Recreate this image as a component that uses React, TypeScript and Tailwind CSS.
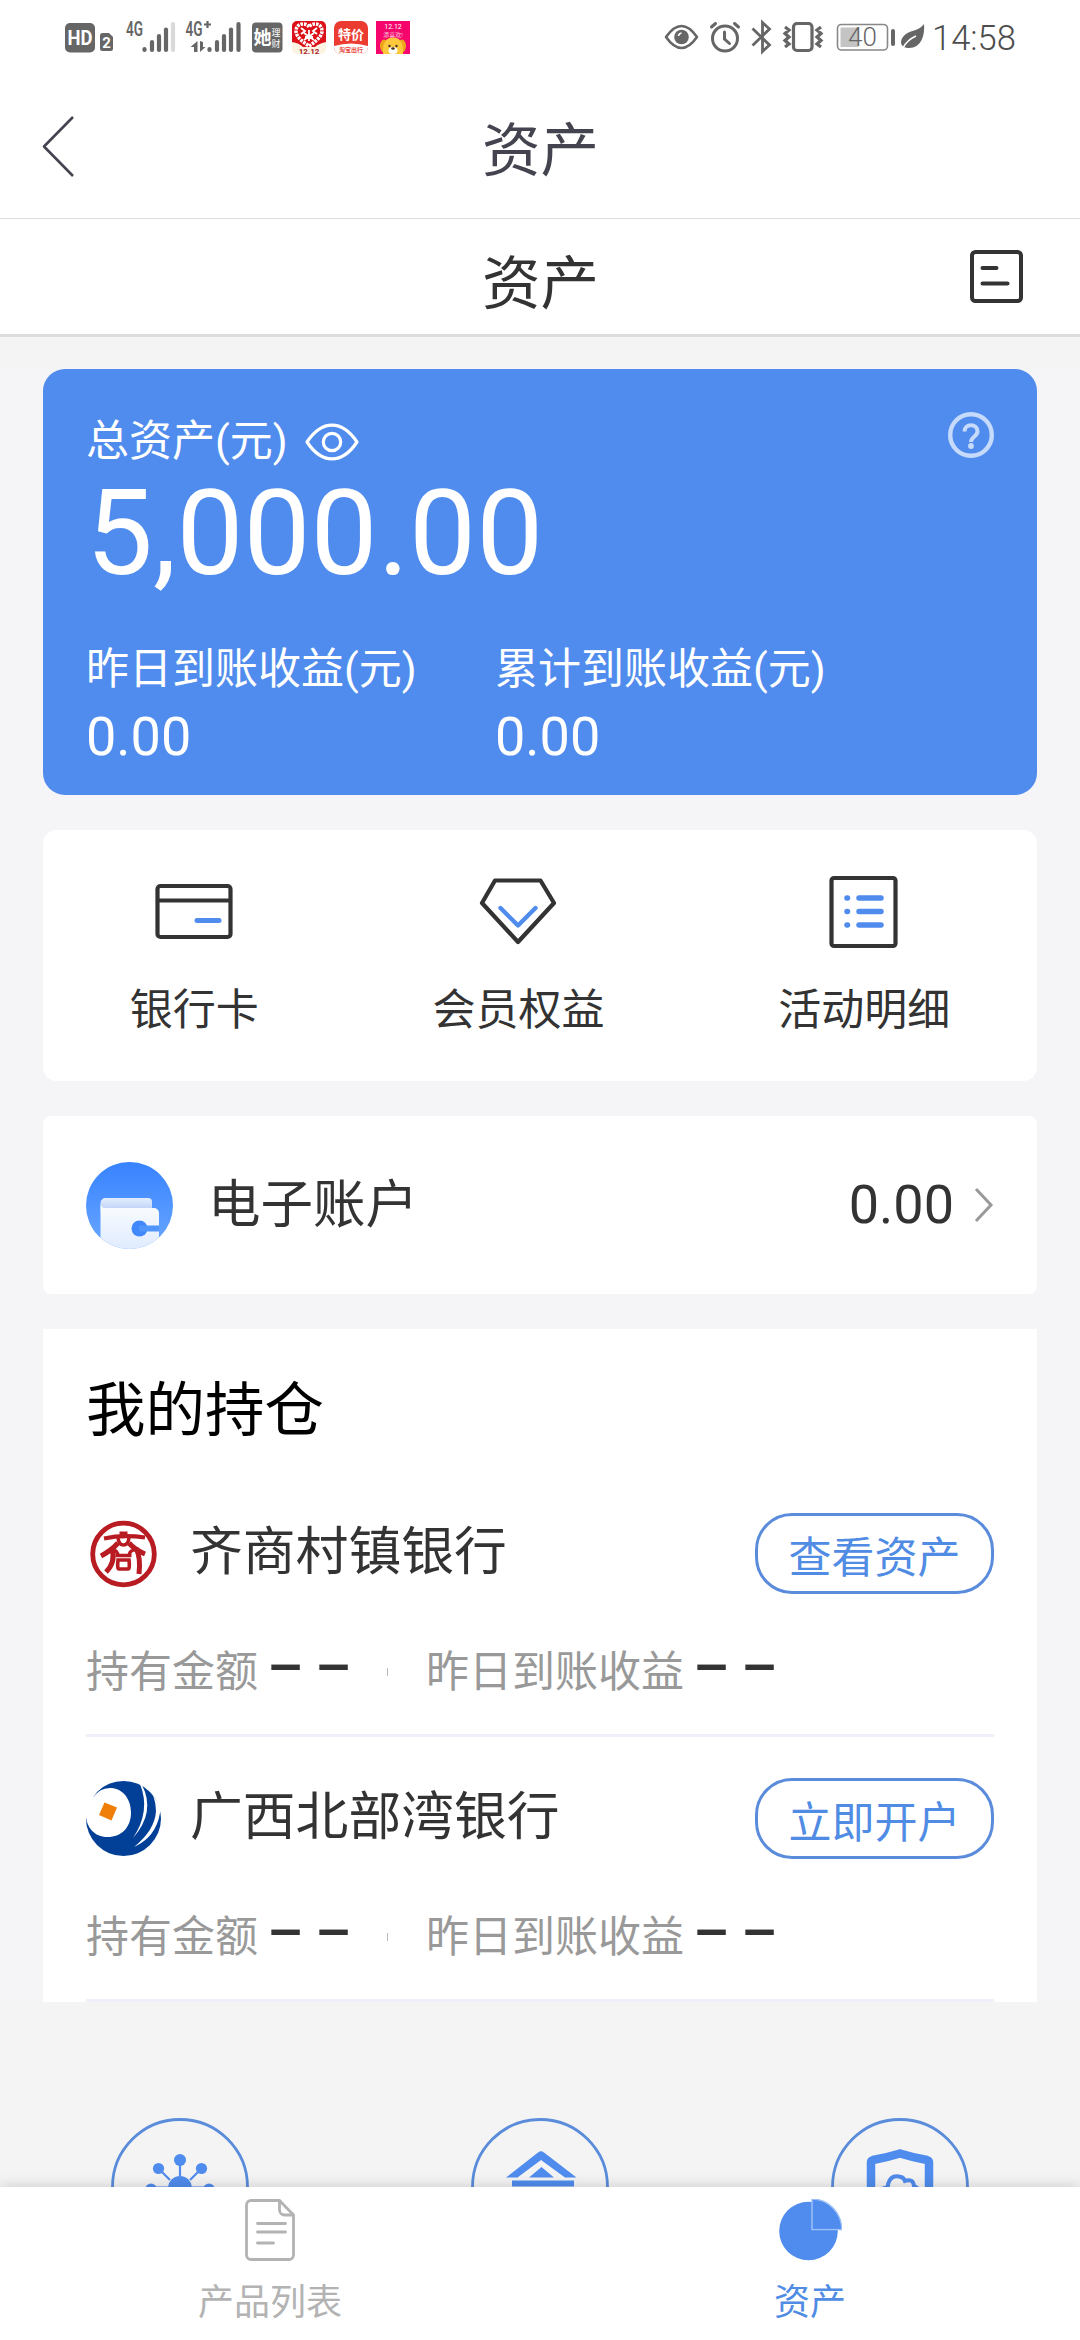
import React, { type FC, type PropsWithChildren, type ReactNode } from "react";

const StatusIcon: FC<PropsWithChildren<{ x: number; w: number }>> = ({ x, w, children }) => (
  <svg width={w} height={44} viewBox={`${x} 12 ${w} 44`} className="shrink-0 overflow-visible" fill="#666">
    {children}
  </svg>
);

const Signal: FC<{ xs: number[]; faded?: boolean }> = ({ xs, faded }) => (
  <>
    {xs.map((x, i) => (
      <line
        key={x}
        x1={x}
        x2={x}
        y1={50}
        y2={[49, 42, 36, 29.5, 24][i]}
        stroke={faded && i === 4 ? "#d9d9d9" : "#666"}
        strokeWidth={4.2}
        strokeLinecap="round"
      />
    ))}
  </>
);

const StatusBar = () => (
  <div className="flex h-[76px] justify-between pt-3 pr-[66px] pl-[65px]">
    <div className="flex">
      <StatusIcon x={65} w={61}>
        <rect x="65" y="23" width="30" height="29.5" rx="5" />
        <text x="80" y="45" fontSize="20" fontWeight="bold" fill="#fff" textAnchor="middle" textLength="25" lengthAdjust="spacingAndGlyphs">HD</text>
        <path d="M103 33h6l4 4v11.500a2.500 2.500 0 0 1-2.500 2.500h-8a2.500 2.500 0 0 1-2.500-2.500v-13a2.500 2.500 0 0 1 3-2.500z" />
        <text x="106.500" y="47.500" fontSize="15" fontWeight="bold" fill="#fff" textAnchor="middle">2</text>
      </StatusIcon>
      <StatusIcon x={126} w={59}>
        <text x="126" y="36" fontSize="20" fontWeight="600" textLength="17" lengthAdjust="spacingAndGlyphs">4G</text>
        <Signal xs={[144.500, 152, 159, 166, 173]} faded />
      </StatusIcon>
      <StatusIcon x={185} w={67}>
        <text x="185.500" y="36" fontSize="20" fontWeight="600" textLength="17" lengthAdjust="spacingAndGlyphs">4G</text>
        <path d="M207.500 21v7M204 24.500h7" stroke="#666" strokeWidth="2.200" />
        <path d="M197.500 41v11h-3.500v-5h-3.500zM200 41v11l5.500-5h-2.500v-5z" />
        <Signal xs={[209.500, 217, 224, 231, 238.500]} />
      </StatusIcon>
      <StatusIcon x={252} w={40}>
        <rect x="252" y="22.500" width="30.500" height="30" rx="4" />
        <text x="253.500" y="44" fontSize="18" fontWeight="bold" fill="#fff">她</text>
        <text x="271.500" y="36" fontSize="9" fill="#fff">理</text>
        <text x="271.500" y="46.500" fontSize="9" fill="#fff">财</text>
      </StatusIcon>
      <StatusIcon x={292} w={42}>
        <rect x="292" y="21" width="34" height="33" rx="5" fill="#fdf3e3" />
        <path d="M292 26a5 5 0 0 1 5-5h24a5 5 0 0 1 5 5v16q-8 2-11 5h-12q-4-4-11-5z" fill="#dc1018" />
        <path d="M309 27c-3-5-13-4-13 4 0 6 7 11 13 15 6-4 13-9 13-15 0-8-10-9-13-4z" fill="none" stroke="#fff" strokeWidth="3.500" strokeDasharray="2.500 1" />
        <path d="M301 28l4 3-4 3M317 28l-4 3 4 3M305 37h8M309 30v11M304 33l10 7M314 33l-10 7" stroke="#fff" strokeWidth="1.800" fill="none" />
        <text x="309" y="53.500" fontSize="8" fontWeight="bold" fill="#a81c28" textAnchor="middle">12.12</text>
      </StatusIcon>
      <StatusIcon x={334} w={42}>
        <rect x="334" y="21" width="34" height="33" rx="7" fill="#ec3b30" />
        <path d="M334 46q17-5 34 0v1a7 7 0 0 1-7 7h-20a7 7 0 0 1-7-7z" fill="#fff" />
        <text x="351" y="39" fontSize="13" fontWeight="bold" fill="#fff" textAnchor="middle">特价</text>
        <text x="351" y="52" fontSize="6" fontWeight="bold" fill="#e8493c" textAnchor="middle">淘宝出行</text>
      </StatusIcon>
      <StatusIcon x={376} w={34}>
        <rect x="376" y="21" width="34" height="33" fill="#f5056c" />
        <text x="393" y="29" fontSize="7" fill="#fff" textAnchor="middle">12.12</text>
        <text x="393" y="36.500" fontSize="6" fill="#ffc6dc" textAnchor="middle">添喜欢!</text>
        <ellipse cx="384" cy="46" rx="4" ry="6.500" fill="#eda51c" />
        <ellipse cx="402" cy="46" rx="4" ry="6.500" fill="#eda51c" />
        <path d="M383 54q-1-16.500 10-16.500t10 16.500z" fill="#fdc83c" />
        <circle cx="389.500" cy="46" r="1.200" fill="#432" />
        <circle cx="396.500" cy="46" r="1.200" fill="#432" />
        <ellipse cx="393" cy="50.500" rx="4.500" ry="3.500" fill="#fff" />
        <ellipse cx="393" cy="48.500" rx="1.800" ry="1.200" fill="#432" />
      </StatusIcon>
    </div>
    <div className="flex">
      <StatusIcon x={664} w={44}>
        <path d="M666 37q15.500-22 31 0-15.500 22-31 0z" fill="none" stroke="#666" strokeWidth="2.600" strokeLinejoin="round" />
        <circle cx="681.500" cy="37" r="7.300" />
        <path d="M678.500 36a3.500 3.500 0 0 1 3-3" fill="none" stroke="#fff" strokeWidth="1.600" />
      </StatusIcon>
      <StatusIcon x={708} w={42}>
        <g fill="none" stroke="#666" strokeWidth="3" strokeLinecap="round">
          <circle cx="725" cy="38.500" r="12.500" />
          <path d="M724.500 32v7l5 4.500M711.500 27l4-3.500M738.500 27l-4-3.500" />
        </g>
      </StatusIcon>
      <StatusIcon x={750} w={32}>
        <path d="M752.500 28.500l17 16.500-7 6.500V22.500l7 6.500-17 16.500" fill="none" stroke="#666" strokeWidth="2.800" />
      </StatusIcon>
      <StatusIcon x={782} w={52}>
        <g fill="none" stroke="#666" strokeWidth="3.200">
          <rect x="793.500" y="23.500" width="18.500" height="27" rx="3.500" />
          <path d="M785 27l4 3-4 3.500 4 3.500-4 3.500 4 3.500-4 3M821 27l-4 3 4 3.500-4 3.500 4 3.500-4 3.500 4 3" />
        </g>
      </StatusIcon>
      <StatusIcon x={834} w={66}>
        <rect x="837.500" y="24.500" width="50" height="25.500" rx="4" fill="none" stroke="#888" strokeWidth="1.600" />
        <rect x="840.500" y="27.500" width="18" height="19.500" rx="1" fill="#c4c4c4" />
        <text x="862.500" y="46" fontSize="26" fontWeight="300" textAnchor="middle">40</text>
        <rect x="891" y="29" width="4" height="17" rx="2" />
      </StatusIcon>
      <StatusIcon x={900} w={32}>
        <path d="M924 24c1 12-3 24-15 24-10 0-10-9-3-14 5-4 13-3 18-10z" />
        <path d="M903 48q4-8 13-12" fill="none" stroke="#fff" strokeWidth="1.500" />
      </StatusIcon>
      <div className="w-[82px] pt-[7px] text-[34.500px] leading-[39px] font-light whitespace-nowrap text-[#4d4d4d]">14:58</div>
    </div>
  </div>
);

const NavBar = () => (
  <div className="flex h-[143px] items-center border-b border-[#ddd] px-10">
    <svg width="36" height="64" viewBox="0 0 36 64" fill="none" stroke="#444450" strokeWidth="2.600" strokeLinejoin="round">
      <path d="M33 2L4 31.500 33 61" />
    </svg>
    <h1 className="flex-1 pt-2 pr-[35px] text-center text-[58.500px] leading-[60px] text-[#444450]">资产</h1>
  </div>
);

const TitleBar = () => (
  <div className="flex h-[118px] items-center border-b-[3px] border-[#ddd] pr-[57px] pl-[111px]">
    <h2 className="flex-1 pt-3.5 text-center text-[58.500px] leading-[60px] text-[#333]">资产</h2>
    <svg width="53" height="53" viewBox="0 0 53 53" fill="none" stroke="#333" strokeWidth="4" strokeLinecap="round">
      <rect x="2" y="2" width="49" height="49" rx="3.500" />
      <path d="M12.500 18h14M12.500 33.500h25" />
    </svg>
  </div>
);

const Metric: FC<{ label: string; value: string }> = ({ label, value }) => (
  <div className="w-[409px]">
    <div className="text-[43px] leading-[50px] whitespace-nowrap">{label}</div>
    <div className="mt-[13px] text-[54px] leading-[60px]">{value}</div>
  </div>
);

const TotalCard = () => (
  <div className="h-[426px] rounded-[22px] bg-[#508ced] px-[43px] pt-[43px] text-white">
    <div className="flex items-start justify-between">
      <div className="flex items-center gap-[17px] pt-1">
        <span className="text-[43px] leading-[50px]">总资产(元)</span>
        <svg width="54" height="38" viewBox="0 0 54 38" className="mt-0.5" fill="none" stroke="#fff" strokeWidth="3.200">
          <path d="M2 19C17-3.500 37-3.500 52 19 37 41.500 17 41.500 2 19z" strokeLinejoin="round" />
          <circle cx="27" cy="19" r="8.700" />
        </svg>
      </div>
      <svg width="46" height="46" viewBox="0 0 46 46" fill="none" stroke="#c6dbfc">
        <circle cx="23" cy="23" r="20.800" strokeWidth="4.400" />
        <path d="M16.500 19.500c0-8.500 13-8.500 13 0 0 5-6.500 5-6.500 10.500" strokeWidth="4" />
        <circle cx="23" cy="34" r="2.900" fill="#c6dbfc" stroke="none" />
      </svg>
    </div>
    <div className="mt-[7px] text-[119.300px] leading-[120px]">5,000.00</div>
    <div className="mt-[51px] flex">
      <Metric label="昨日到账收益(元)" value="0.00" />
      <Metric label="累计到账收益(元)" value="0.00" />
    </div>
  </div>
);

const Shortcut: FC<PropsWithChildren<{ label: string }>> = ({ label, children }) => (
  <div className="flex flex-col items-center">
    <svg width="80" height="80" viewBox="0 0 80 80" fill="none" stroke="#333" strokeWidth="4.200" strokeLinejoin="round" strokeLinecap="round">
      {children}
    </svg>
    <span className="mt-[34px] text-[43px] leading-[50px] text-[#333]">{label}</span>
  </div>
);

const Shortcuts = () => (
  <div className="mt-[35px] flex h-[251px] justify-around rounded-[14px] bg-white pt-[41px]">
    <Shortcut label="银行卡">
      <rect x="3.500" y="15" width="73" height="51" rx="3" />
      <path d="M4 29.500h72" />
      <path d="M43 49.500h22" stroke="#508ced" strokeWidth="5" />
    </Shortcut>
    <Shortcut label="会员权益">
      <path d="M17 9.500h45.500L76 32 40 71 4 32z" />
      <path d="M22.500 37L40 54.500 57.500 37" stroke="#508ced" strokeWidth="4.400" />
    </Shortcut>
    <Shortcut label="活动明细">
      <rect x="7.500" y="7" width="64" height="68" rx="2.500" />
      <path d="M23 27h.5M23 40.500h.5M23 54h.5M35 27h22M35 40.500h22M35 54h22" stroke="#508ced" strokeWidth="5.500" />
    </Shortcut>
  </div>
);

const AccountCard = () => (
  <div className="mt-[35px] flex h-[178px] items-center rounded-lg bg-white px-[43px]">
    <svg width="87" height="87" viewBox="0 0 87 87">
      <defs>
        <linearGradient id="disc" x2="0" y2="1">
          <stop stopColor="#3782ff" />
          <stop offset="1" stopColor="#6aa8ff" />
        </linearGradient>
        <linearGradient id="flap" x2="0" y2="1">
          <stop stopColor="#e4eefd" />
          <stop offset="1" stopColor="#b5ccf6" />
        </linearGradient>
        <linearGradient id="wallet" x2="0" y2="1">
          <stop stopColor="#fbfdff" />
          <stop offset="1" stopColor="#dfebfe" />
        </linearGradient>
        <clipPath id="round">
          <circle cx="43.500" cy="43.500" r="43.500" />
        </clipPath>
      </defs>
      <g clipPath="url(#round)">
        <rect width="87" height="87" fill="url(#disc)" />
        <path d="M14.500 41a5 5 0 0 1 5-5H62a4 4 0 0 1 4 4v10H14.500z" fill="url(#flap)" />
        <path d="M14.500 41q0 5 5 5H68a5 5 0 0 1 5 5v36H14.500z" fill="url(#wallet)" />
        <circle cx="53.500" cy="66.500" r="8" fill="#4189fa" />
        <path d="M53 63.500h20v6H53z" fill="#5095fb" />
      </g>
    </svg>
    <span className="ml-[35px] flex-1 text-[52.500px] leading-[60px] text-[#333]">电子账户</span>
    <span className="text-[54px] leading-[60px] text-[#333]">0.00</span>
    <svg width="20" height="36" viewBox="0 0 20 36" className="ml-5" fill="none" stroke="#999" strokeWidth="3">
      <path d="M2 2l15 16L2 34" />
    </svg>
  </div>
);

const QishangLogo = () => (
  <svg width="75" height="75" viewBox="0 0 75 75" fill="none" stroke="#b81c22">
    <circle cx="37.500" cy="38" r="30.800" strokeWidth="4.800" />
    <path d="M18 22.500q19-4 41-1" strokeWidth="4.200" />
    <path d="M37.500 15.500v5" strokeWidth="8" />
    <path d="M32 22q1 7 5.500 7t5.500-7" strokeWidth="3.500" />
    <path d="M32 27Q26 34 15 40M43 27q6 7 16 11" strokeWidth="5" />
    <path d="M26 33q4 13-6 23M50 32q5 10 3 26" strokeWidth="5" />
    <path d="M25 34q7-1 7 7M51 34q-8-1-8 7" strokeWidth="3.400" />
    <path d="M29.500 39.500h16M32 44q-1 9 1 9h9q2 0 1-9z" strokeWidth="3.600" />
  </svg>
);

const BeibuGulfLogo = () => (
  <svg width="75" height="75" viewBox="0 0 75 75">
    <circle cx="37.500" cy="37.500" r="37.500" fill="#023f96" />
    <path d="M0 0h26Q12 5 7 17q6-10 17-10c12 0 21 10 21 24.500S36 56 21.500 56C8 56 1 46 0 36z" fill="#fff" />
    <path d="M54 3l2 1q14 27-9 53 18-27 7-54z" fill="#fff" />
    <path d="M67 14l9 14-2 4q-4 24-26 34 21-17 22-36 0-8-3-16z" fill="#fff" />
    <path d="M18.500 21.500l12.500 5-5.500 13-12.500-5.500z" fill="#f07f09" />
  </svg>
);

const Dashes = () => (
  <span className="ml-[9px] w-[82px] pb-1.5 text-[57px] leading-[50px] font-medium tracking-[11.500px] whitespace-nowrap text-[#333]">––</span>
);

const Holding: FC<{ logo: ReactNode; name: string; action: string }> = ({ logo, name, action }) => (
  <div className="h-[265px] border-b-[3px] border-[#efeffa] pt-[41px]">
    <div className="flex h-[81px] items-center">
      {logo}
      <span className="ml-[29px] flex-1 pb-1 text-[52.800px] leading-[60px] text-[#333]">{name}</span>
      <button className="h-[81px] w-[239px] rounded-[37px] border-[3px] border-[#5a8cdb] pt-2 text-[43px] leading-[50px] text-[#508ce4]">
        {action}
      </button>
    </div>
    <div className="mt-[53px] flex h-[50px] items-center text-[43px] leading-[50px] text-[#999]">
      <span>持有金额</span>
      <Dashes />
      <span className="mr-[38px] ml-[38px] h-2 w-px bg-[#bbb]" />
      <span>昨日到账收益</span>
      <Dashes />
    </div>
  </div>
);

const Holdings = () => (
  <div className="mt-[35px] bg-white px-[43px]">
    <h3 className="h-[143px] pt-[52px] text-[59.500px] leading-[60px] text-black">我的持仓</h3>
    <Holding logo={<QishangLogo />} name="齐商村镇银行" action="查看资产" />
    <Holding logo={<BeibuGulfLogo />} name="广西北部湾银行" action="立即开户" />
  </div>
);

const Feature: FC<PropsWithChildren> = ({ children }) => (
  <svg width="138" height="138" viewBox="0 0 138 138" fill="#508ced">
    <circle cx="69" cy="69" r="67.500" fill="none" stroke="#5a8cdb" strokeWidth="2.800" />
    {children}
  </svg>
);

const Features = () => (
  <div className="flex h-[185px] justify-around overflow-hidden pt-[116px]">
    <Feature>
      <circle cx="69" cy="70" r="12" />
      <path d="M69 42v16M48 51l11 11M90 51L79 62M40 69.500h17M81 69.500h17" stroke="#508ced" strokeWidth="2.200" />
      <circle cx="69" cy="42" r="6" />
      <circle cx="47.500" cy="50.500" r="5.600" />
      <circle cx="90.500" cy="50.500" r="5.600" />
      <circle cx="40" cy="71" r="5.600" />
      <circle cx="98" cy="71" r="5.600" />
    </Feature>
    <Feature>
      <path d="M35 59.500L67 34.500q3-2.500 6 0l32.500 25H94L70 42 46.500 59.500z" />
      <path d="M58 59.500L70.500 49 83 59.500zM41 62.500h62v6H41zM43.500 70.500h11v20h-11zM67 70.500h11v20H67zM90 70.500h11v20H90z" />
    </Feature>
    <Feature>
      <path d="M40 100V44.500q0-2 2-2.500 14-2.500 27-6.500 13 4 27 6.500 2 .5 2 2.500V100" fill="none" stroke="#508ced" strokeWidth="8.500" />
      <path d="M50 71q8-1 7-5 3-10 13-7 3 1 4 4 8-3 9 5 4 2 6 5" fill="none" stroke="#508ced" strokeWidth="4" />
    </Feature>
  </div>
);

const TabBar = () => (
  <div className="relative flex h-[153px] bg-white shadow-[0_0_14px_rgba(0,0,0,0.18)]">
    <div className="flex flex-1 flex-col items-center pt-3 text-[#b3b3b3]">
      <svg width="50" height="62" viewBox="0 0 50 62" fill="none" stroke="currentColor" strokeWidth="2.800" strokeLinecap="round" strokeLinejoin="round">
        <path d="M34.500 1.500H6a4.500 4.500 0 0 0-4.500 4.500v50A4.500 4.500 0 0 0 6 60.500h38a4.500 4.500 0 0 0 4.500-4.500V16z" />
        <path d="M34.500 2v9a5 5 0 0 0 5 5h8.500M12.500 24.500h28M12.500 33h28M12.500 44h16" />
      </svg>
      <span className="mt-[21px] text-[36px] leading-[42px]">产品列表</span>
    </div>
    <div className="flex flex-1 flex-col items-center pt-3 text-[#508ce4]">
      <svg width="64" height="62" viewBox="0 0 64 62" fill="#508ced">
        <circle cx="30.500" cy="32" r="29.300" />
        <path d="M34 0a30 30 0 0 1 29.500 30.500H34z" stroke="#9cc0f8" strokeWidth="1.500" />
        <path d="M35 1a29.500 29.500 0 0 1 28 28.500H35z" />
      </svg>
      <span className="mt-[21px] text-[36px] leading-[42px]">资产</span>
    </div>
  </div>
);

const App = () => (
  <div className="flex h-[2340px] w-[1080px] flex-col overflow-hidden bg-[#f4f4f4] font-[Roboto,'Noto_Sans_CJK_SC',sans-serif]">
    <div className="bg-white">
      <StatusBar />
      <NavBar />
      <TitleBar />
    </div>
    <div className="mt-8 bg-[#f5f5f8] px-[43px]">
      <TotalCard />
      <Shortcuts />
      <AccountCard />
      <Holdings />
    </div>
    <Features />
    <TabBar />
  </div>
);

export default App;
